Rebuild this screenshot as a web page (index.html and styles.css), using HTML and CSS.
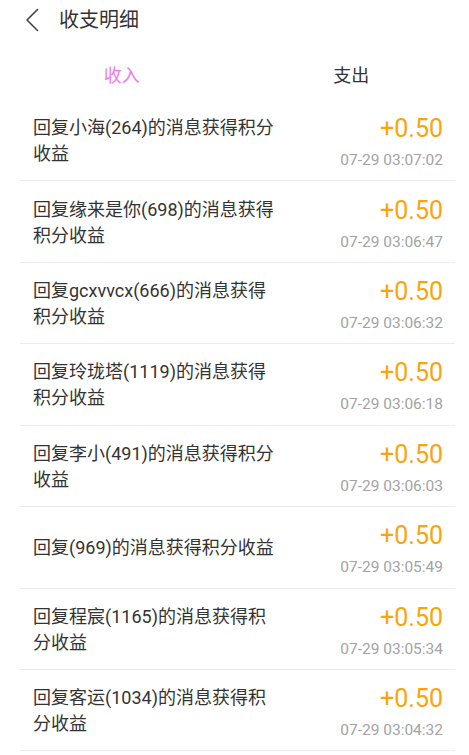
FILE: index.html
```html
<!DOCTYPE html>
<html lang="zh">
<head>
<meta charset="utf-8">
<title>收支明细</title>
<link rel="stylesheet" href="styles.css">
</head>
<body>
<header class="topbar">
  <svg class="back" width="14" height="24" viewBox="0 0 14 24"><path d="M12.5 1.5 L2 12 L12.5 22.5" fill="none" stroke="#444" stroke-width="1.6" stroke-linecap="round" stroke-linejoin="round"/></svg>
  <h1 class="title">收支明细</h1>
</header>
<nav class="tabs">
  <div class="tab active">收入</div>
  <div class="tab">支出</div>
</nav>
<ul class="list">
  <li class="row"><div class="desc">回复小海(264)的消息获得积分收益</div><div class="meta"><div class="amount">+0.50</div><div class="time">07-29 03:07:02</div></div></li>
  <li class="row"><div class="desc">回复缘来是你(698)的消息获得积分收益</div><div class="meta"><div class="amount">+0.50</div><div class="time">07-29 03:06:47</div></div></li>
  <li class="row"><div class="desc">回复gcxvvcx(666)的消息获得积分收益</div><div class="meta"><div class="amount">+0.50</div><div class="time">07-29 03:06:32</div></div></li>
  <li class="row"><div class="desc">回复玲珑塔(1119)的消息获得积分收益</div><div class="meta"><div class="amount">+0.50</div><div class="time">07-29 03:06:18</div></div></li>
  <li class="row"><div class="desc">回复李小(491)的消息获得积分收益</div><div class="meta"><div class="amount">+0.50</div><div class="time">07-29 03:06:03</div></div></li>
  <li class="row"><div class="desc">回复(969)的消息获得积分收益</div><div class="meta"><div class="amount">+0.50</div><div class="time">07-29 03:05:49</div></div></li>
  <li class="row"><div class="desc">回复程宸(1165)的消息获得积分收益</div><div class="meta"><div class="amount">+0.50</div><div class="time">07-29 03:05:34</div></div></li>
  <li class="row"><div class="desc">回复客运(1034)的消息获得积分收益</div><div class="meta"><div class="amount">+0.50</div><div class="time">07-29 03:04:32</div></div></li>
</ul>
</body>
</html>
```

FILE: styles.css
```css
* { box-sizing: border-box; }
html, body {
  margin: 0;
  padding: 0;
  background: #fff;
}
body {
  font-family: Roboto, "Noto Sans CJK SC", sans-serif;
  color: #333;
  overflow: hidden;
}
.topbar {
  height: 40px;
  display: flex;
  align-items: center;
  padding-left: 25px;
}
.back {
  display: block;
  flex: none;
}
.title {
  margin: 0 0 0 20px;
  font-size: 20px;
  font-weight: normal;
  line-height: 40px;
  color: #333;
}
.tabs {
  display: flex;
  height: 60px;
  padding: 11px 3px 0 7px;
}
.tab {
  flex: 1;
  text-align: center;
  font-size: 18px;
  line-height: 50px;
  color: #333;
}
.tab.active {
  color: #ee7cee;
}
.list {
  list-style: none;
  margin: 0 14px 0 20px;
  padding: 0;
}
.row {
  display: flex;
  align-items: center;
  justify-content: space-between;
  height: 81.43px;
  padding: 0 12px 0 13px;
  border-bottom: 1px solid #ececec;
}
.desc {
  width: 246px;
  font-size: 18px;
  line-height: 26px;
  color: #333;
  padding-top: 2px;
}
.meta {
  text-align: right;
  flex: none;
  padding-top: 4px;
}
.amount {
  font-size: 25px;
  line-height: 30px;
  color: #fba40a;
}
.time {
  margin-top: 6px;
  font-size: 15.5px;
  line-height: 20px;
  color: #a3a3a3;
}
```
